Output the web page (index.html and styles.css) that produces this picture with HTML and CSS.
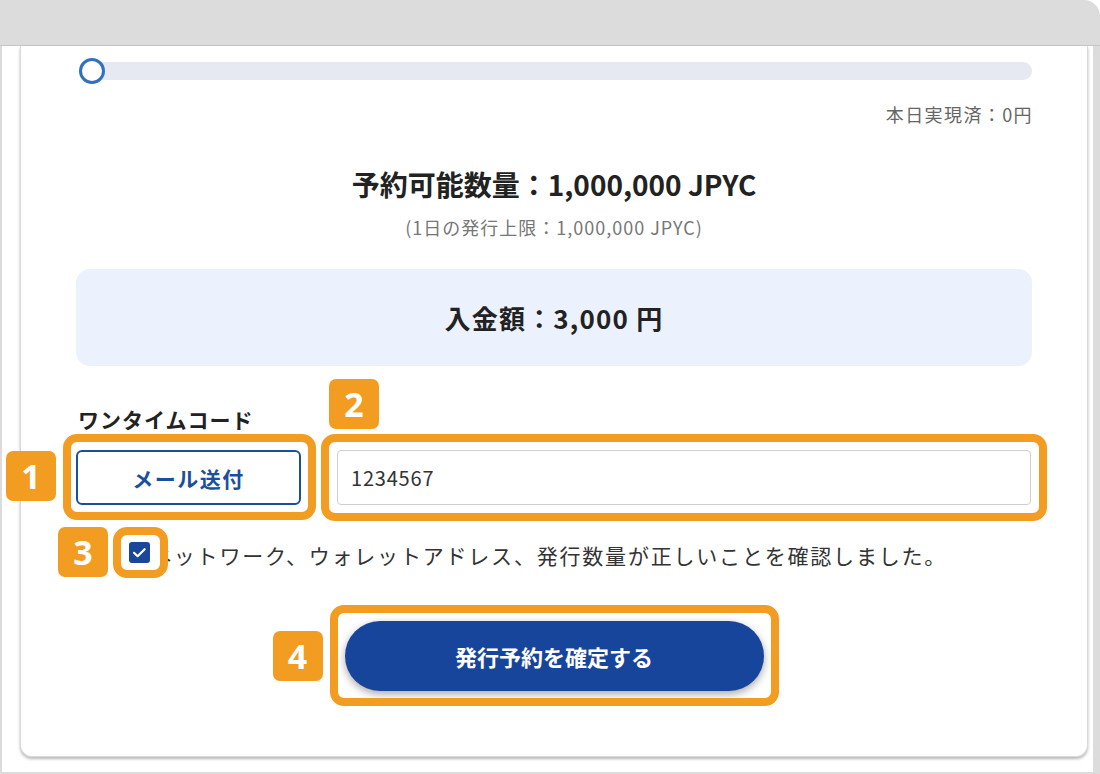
FILE: index.html
```html
<!DOCTYPE html>
<html lang="ja">
<head>
<meta charset="utf-8">
<title>発行予約</title>
<link rel="stylesheet" href="styles.css">
</head>
<body>
<div class="window">
  <div class="titlebar"></div>
  <div class="viewport">
    <div class="card">
      <div class="progress">
        <div class="track"></div>
        <div class="thumb"></div>
      </div>
      <div class="realized">本日実現済：0円</div>
      <div class="available">予約可能数量：1,000,000 JPYC</div>
      <div class="limit">(1日の発行上限：1,000,000 JPYC)</div>
      <div class="amount">入金額：3,000 円</div>
      <div class="otp-label">ワンタイムコード</div>
      <div class="otp-row">
        <div class="hl hl-send">
          <button class="send-btn" type="button">メール送付</button>
          <span class="badge badge-1">1</span>
        </div>
        <div class="hl hl-input">
          <input class="otp-input" type="text" value="1234567">
          <span class="badge badge-2">2</span>
        </div>
      </div>
      <div class="confirm-row">
        <div class="hl hl-check">
          <span class="checkbox">
            <svg viewBox="0 0 21 21" width="21" height="21"><path d="M5 10.8l3.6 3.4 7-7" fill="none" stroke="#fff" stroke-width="2.2" stroke-linecap="round" stroke-linejoin="round"/></svg>
          </span>
          <span class="badge badge-3">3</span>
        </div>
        <span class="confirm-text">ネットワーク、ウォレットアドレス、発行数量が正しいことを確認しました。</span>
      </div>
      <div class="submit-wrap">
        <div class="hl hl-submit">
          <button class="submit-btn" type="button">発行予約を確定する</button>
          <span class="badge badge-4">4</span>
        </div>
      </div>
    </div>
  </div>
</div>
</body>
</html>
```

FILE: styles.css
```css
* { box-sizing: border-box; }
html, body {
  margin: 0;
  padding: 0;
  background: #ffffff;
}
body {
  font-family: "Noto Sans CJK JP", "Noto Sans", sans-serif;
  color: #222;
}
.window {
  width: 1100px;
  height: 774px;
  background: #dcdcdc;
  border-top-right-radius: 16px;
  display: flex;
  flex-direction: column;
  padding: 0 7px 2px 2px;
  overflow: hidden;
}
.titlebar {
  height: 46px;
  flex: none;
  border-bottom: 1px solid #c6c6c6;
  margin: 0 -7px 0 -2px;
}
.viewport {
  flex: 1;
  background: #ffffff;
  padding: 0 5px 15px 18px;
  display: flex;
  flex-direction: column;
}
.card {
  flex: 1;
  background: #fff;
  border: 1px solid #dadada;
  border-top: none;
  border-radius: 0 0 12px 12px;
  box-shadow: 0 2px 3px rgba(0,0,0,0.28);
  padding: 12px 55px 0 55px;
  display: flex;
  flex-direction: column;
}
.progress {
  position: relative;
  height: 26px;
  display: flex;
  align-items: center;
  padding-left: 4px;
}
.track {
  width: 959px;
  height: 18px;
  border-radius: 9px;
  background: #e6e9f1;
}
.thumb {
  position: absolute;
  left: 3px;
  top: 0;
  width: 26px;
  height: 26px;
  border-radius: 50%;
  border: 3px solid #3170c0;
  background: #fff;
}
.realized {
  margin-top: 18px;
  text-align: right;
  font-size: 18px;
  letter-spacing: 1.4px;
  line-height: 24px;
  color: #666;
  margin-right: -1px;
}
.available {
  margin-top: 40px;
  text-align: center;
  font-size: 28px;
  line-height: 36px;
  font-weight: 700;
  color: #222;
}
.limit {
  margin-top: 13px;
  text-align: center;
  font-size: 18px;
  letter-spacing: 1px;
  line-height: 24px;
  color: #777;
}
.amount {
  margin-top: 30px;
  height: 97px;
  border-radius: 14px;
  background: #ebf1fd;
  display: flex;
  align-items: center;
  justify-content: center;
  font-size: 26px;
  letter-spacing: 1.2px;
  font-weight: 700;
  color: #222;
}
.otp-label {
  margin-top: 40px;
  font-size: 21px;
  letter-spacing: 1px;
  line-height: 26px;
  font-weight: 700;
  color: #222;
  padding-left: 2px;
}
.otp-row {
  margin-top: 18px;
  display: flex;
  gap: 36px;
}
.hl {
  position: relative;
}
.hl::before {
  content: "";
  position: absolute;
  border: 8px solid #f39c22;
  border-radius: 14px;
  pointer-events: none;
}
.hl-send::before { inset: -16px -15px -15px -13px; }
.hl-input { flex: 0 0 694px; }
.hl-input::before { inset: -16px; }
.hl-check { z-index: 1; }
.hl-check::before {
  inset: -15px -18px -15px -16px;
  background: #fff;
  z-index: -1;
}
.hl-submit::before { inset: -16px -15px -15px -15px; }
.send-btn {
  width: 225px;
  height: 55px;
  border: 2px solid #1a4fa0;
  border-radius: 6px;
  background: #fff;
  color: #1a4fa0;
  font-family: inherit;
  font-size: 21px;
  letter-spacing: 1.5px;
  font-weight: 700;
  display: block;
}
.otp-input {
  display: block;
  width: 694px;
  height: 55px;
  border: 1px solid #cfcfcf;
  border-radius: 4px;
  padding: 0 13px;
  font-family: inherit;
  font-size: 20px;
  letter-spacing: 0.8px;
  color: #333;
  background: #fff;
}
.confirm-row {
  margin-top: 33px;
  display: flex;
  align-items: center;
  height: 28px;
  padding-left: 53px;
}
.checkbox {
  display: block;
  width: 21px;
  height: 21px;
  border-radius: 3px;
  background: #1a479c;
}
.checkbox svg { display: block; }
.confirm-text {
  margin-left: 1px;
  font-size: 21px;
  letter-spacing: 1.8px;
  color: #333;
  line-height: 28px;
  position: relative;
  top: 3px;
}
.submit-wrap {
  margin-top: 55px;
  display: flex;
  justify-content: center;
}
.submit-btn {
  display: block;
  width: 419px;
  height: 70px;
  border: none;
  border-radius: 35px;
  background: #17459b;
  color: #fff;
  font-family: inherit;
  font-size: 22px;
  font-weight: 700;
  box-shadow: 0 3px 8px rgba(0,0,0,0.35);
}
.badge {
  position: absolute;
  width: 50px;
  height: 50px;
  border-radius: 7px;
  background: #f39c22;
  color: #fff;
  font-family: "Noto Sans", "Open Sans", sans-serif;
  font-weight: 700;
  font-size: 34px;
  line-height: 50px;
  text-align: center;
}
.badge-1 { left: -70px; top: 1px; }
.badge-2 { left: -8px; top: -71px; }
.badge-3 { left: -71px; top: -15px; }
.badge-4 { left: -72px; top: 10px; }
```
